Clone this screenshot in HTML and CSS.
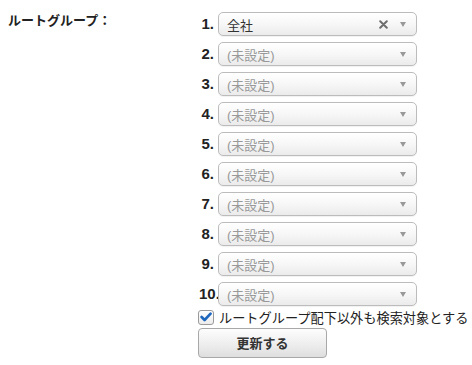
FILE: index.html
```html
<!DOCTYPE html>
<html lang="ja">
<head>
<meta charset="utf-8">
<link rel="stylesheet" href="styles.css">
</head>
<body>
<div class="form">
  <div class="label">ルートグループ：</div>
  <div class="fields">
    <div class="row"><span class="num">1.</span><div class="select"><span class="value">全社</span><svg class="clear" width="9" height="9" viewBox="0 0 9 9"><path d="M1.2 1.2 L7.8 7.8 M7.8 1.2 L1.2 7.8" stroke="#6e6e6e" stroke-width="2" stroke-linecap="round"/></svg><span class="arrow"></span></div></div>
    <div class="row"><span class="num">2.</span><div class="select"><span class="value empty">(未設定)</span><span class="arrow"></span></div></div>
    <div class="row"><span class="num">3.</span><div class="select"><span class="value empty">(未設定)</span><span class="arrow"></span></div></div>
    <div class="row"><span class="num">4.</span><div class="select"><span class="value empty">(未設定)</span><span class="arrow"></span></div></div>
    <div class="row"><span class="num">5.</span><div class="select"><span class="value empty">(未設定)</span><span class="arrow"></span></div></div>
    <div class="row"><span class="num">6.</span><div class="select"><span class="value empty">(未設定)</span><span class="arrow"></span></div></div>
    <div class="row"><span class="num">7.</span><div class="select"><span class="value empty">(未設定)</span><span class="arrow"></span></div></div>
    <div class="row"><span class="num">8.</span><div class="select"><span class="value empty">(未設定)</span><span class="arrow"></span></div></div>
    <div class="row"><span class="num">9.</span><div class="select"><span class="value empty">(未設定)</span><span class="arrow"></span></div></div>
    <div class="row"><span class="num wide">10.</span><div class="select"><span class="value empty">(未設定)</span><span class="arrow"></span></div></div>
    <label class="check">
      <span class="box"><svg width="12" height="10" viewBox="0 0 12 10"><path d="M1.6 5 L4.6 8 L10.6 1.6" fill="none" stroke="#1f67bd" stroke-width="2.6" stroke-linecap="round" stroke-linejoin="round"/></svg></span>
      <span class="check-text">ルートグループ配下以外も検索対象とする</span>
    </label>
    <button class="btn">更新する</button>
  </div>
</div>
</body>
</html>
```
FILE: styles.css
```css
html, body {
  margin: 0;
  padding: 0;
  background: #fff;
}
body {
  font-family: "Liberation Sans", "Noto Sans CJK JP", sans-serif;
  font-size: 13px;
  color: #222;
}
.form {
  display: flex;
  padding: 12px 0 0 8px;
}
.label {
  width: 190px;
  font-weight: bold;
  font-size: 13px;
  line-height: 16px;
  padding-top: 1px;
  color: #222;
}
.fields {
  display: flex;
  flex-direction: column;
}
.row {
  display: flex;
  align-items: center;
  height: 24px;
  margin-bottom: 6px;
}
.num {
  width: 16px;
  flex: none;
  text-align: right;
  white-space: nowrap;
  font-weight: bold;
  font-size: 15px;
  margin-right: 4px;
  margin-top: -1px;
  color: #222;
}
.num.wide {
  text-align: left;
  margin-left: 1px;
  width: 15px;
}
.select {
  position: relative;
  z-index: 1;
  width: 199px;
  height: 24px;
  box-sizing: border-box;
  border: 1px solid #bcbcbc;
  border-radius: 5px;
  background: linear-gradient(#ffffff 0%, #f7f7f7 50%, #ebebeb 100%);
  box-shadow: 0 1px 1px rgba(0,0,0,0.06);
  display: flex;
  align-items: center;
  padding: 0 8px;
}
.value {
  flex: 1;
  font-size: 13px;
  color: #333;
}
.value.empty {
  color: #999;
}
.clear {
  margin-right: 12px;
}
.arrow {
  width: 0;
  height: 0;
  border-left: 3.5px solid transparent;
  border-right: 3.5px solid transparent;
  border-top: 5px solid #999;
  margin-right: 2px;
}
.check {
  display: flex;
  align-items: center;
  height: 22px;
  margin-top: -6px;
}
.box {
  width: 14px;
  height: 13px;
  border: 1px solid #9a9a9a;
  border-radius: 3px;
  background: linear-gradient(#ffffff, #ececec);
  display: flex;
  align-items: center;
  justify-content: center;
  margin-right: 5px;
}
.check-text {
  font-size: 13.2px;
  color: #222;
}
.btn {
  width: 129px;
  height: 30px;
  margin-top: 0;
  border: 1px solid #a8a8a8;
  border-radius: 4px;
  background: linear-gradient(#fdfdfd 0%, #ececec 60%, #dedede 100%);
  font-family: "Liberation Sans", "Noto Sans CJK JP", sans-serif;
  font-weight: bold;
  font-size: 13px;
  color: #333;
  padding: 0 0 2px 0;
}
```
